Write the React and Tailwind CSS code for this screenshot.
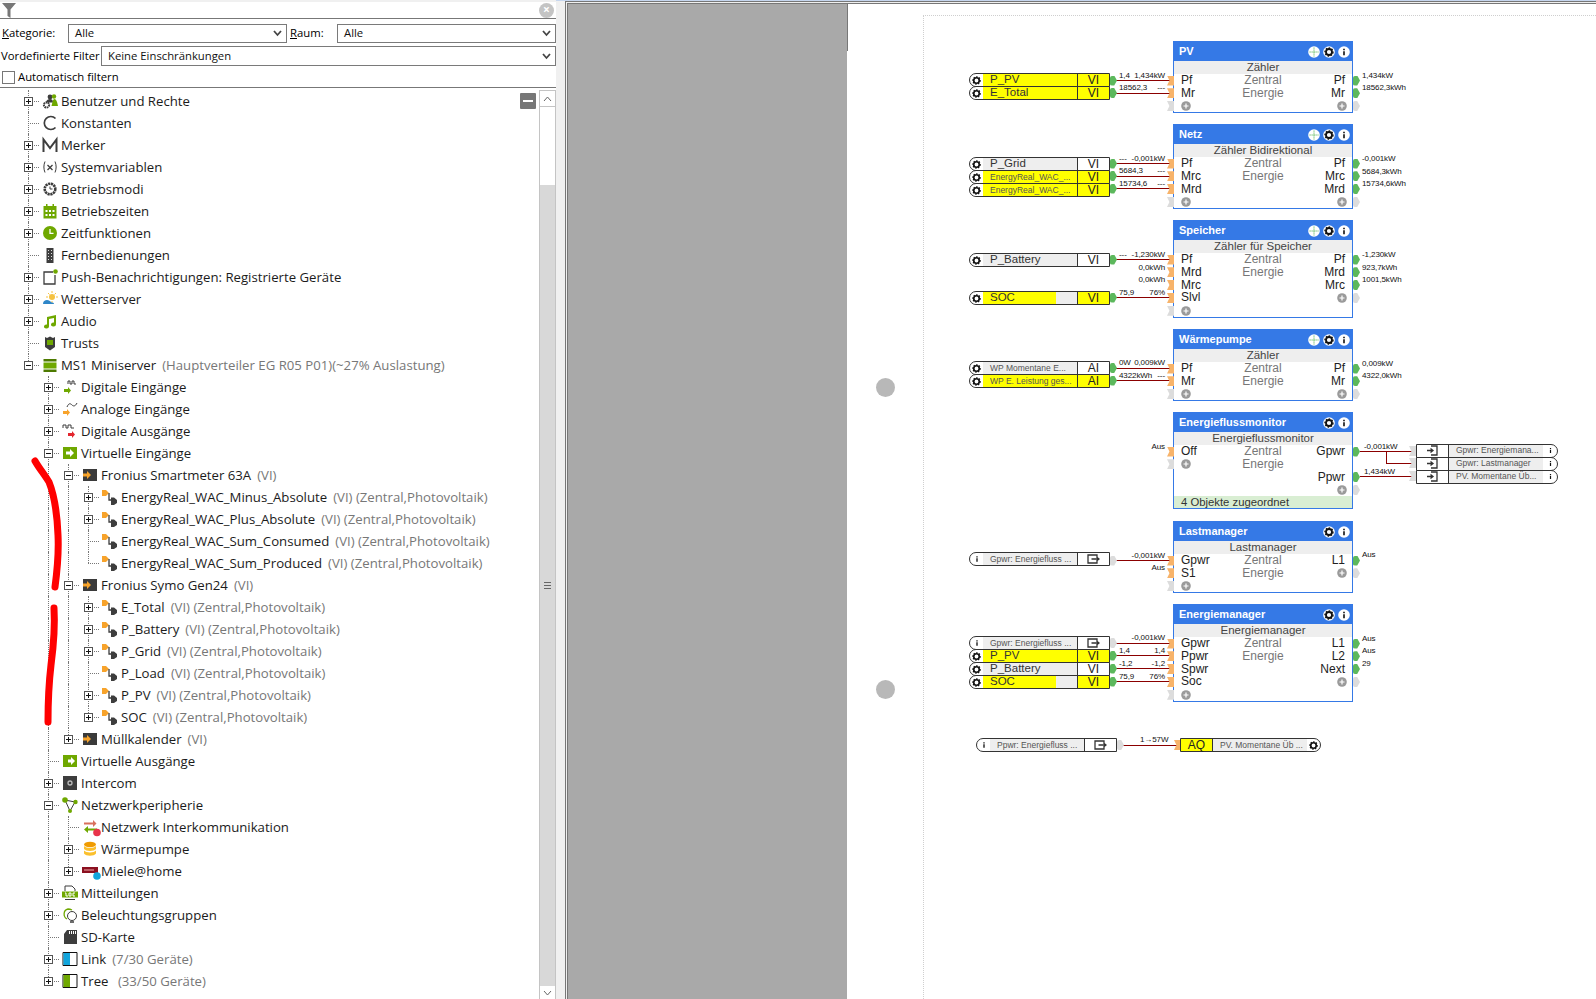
import React from 'react'

const FONT_UI = 'font-["Open_Sans","Noto_Sans",sans-serif]'
const FONT_DIAGRAM = 'font-["Liberation_Sans",Arial,sans-serif]'

const VI = '(VI) (Zentral,Photovoltaik)'

// Flat list of the project tree, depth says where a row hangs
const treeRows = [
  { d: 0, t: 'Benutzer und Rechte', e: '+', i: 'users' },
  { d: 0, t: 'Konstanten', i: 'c' },
  { d: 0, t: 'Merker', e: '+', i: 'm' },
  { d: 0, t: 'Systemvariablen', e: '+', i: 'x' },
  { d: 0, t: 'Betriebsmodi', e: '+', i: 'modes' },
  { d: 0, t: 'Betriebszeiten', e: '+', i: 'calendar' },
  { d: 0, t: 'Zeitfunktionen', e: '+', i: 'clock' },
  { d: 0, t: 'Fernbedienungen', i: 'remote' },
  { d: 0, t: 'Push-Benachrichtigungen: Registrierte Geräte', e: '+', i: 'push' },
  { d: 0, t: 'Wetterserver', e: '+', i: 'weather' },
  { d: 0, t: 'Audio', e: '+', i: 'audio' },
  { d: 0, t: 'Trusts', i: 'trust' },
  { d: 0, t: 'MS1 Miniserver', s: '(Hauptverteiler EG R05 P01)(~27% Auslastung)', e: '-', i: 'server' },
  { d: 1, t: 'Digitale Eingänge', e: '+', i: 'digIn' },
  { d: 1, t: 'Analoge Eingänge', e: '+', i: 'anaIn' },
  { d: 1, t: 'Digitale Ausgänge', e: '+', i: 'digOut' },
  { d: 1, t: 'Virtuelle Eingänge', e: '-', i: 'virt' },
  { d: 2, t: 'Fronius Smartmeter 63A', s: '(VI)', e: '-', i: 'dark' },
  { d: 3, t: 'EnergyReal_WAC_Minus_Absolute', s: VI, e: '+', i: 'sensor' },
  { d: 3, t: 'EnergyReal_WAC_Plus_Absolute', s: VI, e: '+', i: 'sensor' },
  { d: 3, t: 'EnergyReal_WAC_Sum_Consumed', s: VI, i: 'sensor' },
  { d: 3, t: 'EnergyReal_WAC_Sum_Produced', s: VI, i: 'sensor' },
  { d: 2, t: 'Fronius Symo Gen24', s: '(VI)', e: '-', i: 'dark' },
  { d: 3, t: 'E_Total', s: VI, e: '+', i: 'sensor' },
  { d: 3, t: 'P_Battery', s: VI, e: '+', i: 'sensor' },
  { d: 3, t: 'P_Grid', s: VI, e: '+', i: 'sensor' },
  { d: 3, t: 'P_Load', s: VI, i: 'sensor' },
  { d: 3, t: 'P_PV', s: VI, e: '+', i: 'sensor' },
  { d: 3, t: 'SOC', s: VI, e: '+', i: 'sensor' },
  { d: 2, t: 'Müllkalender', s: '(VI)', e: '+', i: 'dark' },
  { d: 1, t: 'Virtuelle Ausgänge', i: 'virtOut' },
  { d: 1, t: 'Intercom', e: '+', i: 'intercom' },
  { d: 1, t: 'Netzwerkperipherie', e: '-', i: 'network' },
  { d: 2, t: 'Netzwerk Interkommunikation', i: 'inter' },
  { d: 2, t: 'Wärmepumpe', e: '+', i: 'db' },
  { d: 2, t: 'Miele@home', e: '+', i: 'miele' },
  { d: 1, t: 'Mitteilungen', e: '+', i: 'log' },
  { d: 1, t: 'Beleuchtungsgruppen', e: '+', i: 'light' },
  { d: 1, t: 'SD-Karte', i: 'sd' },
  { d: 1, t: 'Link', s: '(7/30 Geräte)', e: '+', i: 'link' },
  { d: 1, t: 'Tree', s: ' (33/50 Geräte)', e: '+', i: 'tree' },
]

// does depth `col` still continue somewhere below row `idx`?
function continues(idx, col) {
  for (let k = idx + 1; k < treeRows.length; k++) {
    if (treeRows[k].d < col) return false
    if (treeRows[k].d === col) return true
  }
  return false
}

const G = '#6fa800'
const D = '#3d3d3d'
const O = '#f7a32b'

function TreeIcon({ name }) {
  const icons = {
    users: <g><circle cx="4.500" cy="12" r="2.600" fill="none" stroke={D} strokeWidth="2" strokeDasharray="1.600 .6" /><circle cx="8" cy="4" r="2.400" fill={D} /><path d="M4 9.500c0-2 2-3.500 4-3.500s3 1 3 3.500z" fill={D} /><circle cx="12" cy="3.500" r="2.200" fill={G} /><path d="M9.500 13c1-3 1-7 3-7s3 4 3.500 7z" fill={G} /></g>,
    c: <path d="M13.500 3.500A6.500 6.500 0 1 0 13.500 12.500" fill="none" stroke={D} strokeWidth="1.700" />,
    m: <path d="M1.500 15V2.500L8 11l6.500-8.500V15" fill="none" stroke={D} strokeWidth="2" />,
    x: <g fill="none" stroke={D} strokeWidth="1"><path d="M3 2.500C1.500 6 1.500 10 3 13.500M13 2.500c1.500 3.500 1.500 7.500 0 11" /><path d="M5.500 6l5 5M10.500 6l-5 5" strokeWidth="1.300" /></g>,
    modes: <g><circle cx="8" cy="8" r="5.300" fill="none" stroke={D} strokeWidth="2.600" strokeDasharray="2.200 .6" /><path d="M8 5.500V8h2.500" fill="none" stroke={D} /></g>,
    calendar: <g fill={G}><path d="M1.500 3h13v12.500h-13z" /><path d="M4 1h1.500v3H4zM10.500 1H12v3h-1.500z" /><path d="M3.500 7h2v2h-2zM7 7h2v2H7zM10.500 7h2v2h-2zM3.500 11h2v2h-2zM7 11h2v2H7zM10.500 11h2v2h-2z" fill="#fff" /></g>,
    clock: <g><circle cx="8" cy="8" r="7" fill={G} /><path d="M8 4v4.300h3.500" fill="none" stroke="#fff" strokeWidth="1.300" /></g>,
    remote: <g><path d="M4.500 1h7v15h-7z" fill={D} /><path d="M6 3h1v1H6zM9 3h1v1H9zM6 6h1v1H6zM9 6h1v1H9zM6 9h1v1H6zM9 9h1v1H9zM6 12h1v1H6zM9 12h1v1H9z" fill="#ddd" /></g>,
    push: <g><path d="M11 3H2v12h11V6" fill="none" stroke={D} strokeWidth="1.300" /><circle cx="13.500" cy="2.500" r="2.300" fill={G} /></g>,
    weather: <g><circle cx="10" cy="6" r="3" fill="#f5c242" /><path d="M10 0v2M10 10v2M4 6h2M14 6h2M6 2l1.500 1.500M14 2l-1.500 1.500" stroke="#f5c242" /><path d="M1 13c0-3 2-4 4-4s3 1 4 2 3 0 3 2z" fill="#2e86c8" /></g>,
    audio: <path d="M5 4l9-2v9.500a2.500 2 0 1 1-2-2V5L7 6v7.500a2.500 2 0 1 1-2-2z" fill={G} />,
    trust: <g><path d="M3 2l2 1 3-1.500L11 3l2-1v10l-5 3.500L3 12z" fill={D} /><path d="M5 5h6v5H5z" fill={G} /></g>,
    server: <g fill={G}><path d="M1.500 2h13v2.500h-13z" fill="#4d7a00" /><path d="M1.500 5.500h13v6h-13z" /><path d="M1.500 12.500h13V15h-13z" fill="#4d7a00" /></g>,
    digIn: <g><path d="M6 5V2h2v3h2V2h2v3h2" fill="none" stroke={D} /><path d="M2 10h4V8l3 3.500L6 15v-2H2z" fill={G} /></g>,
    anaIn: <g><path d="M5 6c2-5 4-3 5-2s3 2 5-2" fill="none" stroke={D} /><path d="M1 10h4V8l3 3.500L5 15v-2H1z" fill={O} /></g>,
    digOut: <g><path d="M1 5V2h3v3h2V2h3v3h3" fill="none" stroke={D} /><path d="M6 10h4V8l3 3.500L10 15v-2H6z" fill="#e3262e" /></g>,
    virt: <g><path d="M1 2h14v12H1z" fill={G} /><path d="M4 6.500h4V4l4 4-4 4V9.500H4z" fill="#fff" /></g>,
    virtOut: <g><path d="M1 2h14v12H1z" fill={G} /><path d="M6 6.500h3V4l4 4-4 4V9.500H6z" fill="#fff" /></g>,
    dark: <g><path d="M1 2h14v12H1z" fill="#3a3a3a" /><path d="M1 6.500h4V4l4 4-4 4V9.500H1z" fill={O} /></g>,
    sensor: <g><path d="M0 1h4l3 3-3 3H0z" fill={O} /><path d="M7 4v7h2" fill="none" stroke={D} strokeWidth="1.300" /><path d="M9 8.500h3l3 2.500v3l-3 2H9z" fill={D} /></g>,
    intercom: <g><path d="M1 1h14v14H1z" fill={D} /><circle cx="8" cy="8" r="2" fill="none" stroke="#bbb" strokeWidth="1.300" /></g>,
    network: <g><path d="M3 3l10 2-5 9z" fill="none" stroke={D} /><circle cx="3" cy="3" r="2.800" fill={G} /><circle cx="13.500" cy="5" r="2.200" fill={G} /><circle cx="8" cy="14" r="2" fill={G} /></g>,
    inter: <g><path d="M2 3.500h9V1l3.500 3.500L11 8V5.500H2z" fill="#d9705c" /><path d="M15 9.500H6V7l-4 3.500L6 14v-2.500h9z" fill={G} /><circle cx="15" cy="13.500" r="3.800" fill="#e8344a" /></g>,
    db: <g><ellipse cx="8" cy="3.500" rx="6" ry="2.800" fill="#f09b00" /><path d="M2 5c2 2.500 10 2.500 12 0v3c-2 2.500-10 2.500-12 0z" fill="#fbc02d" /><path d="M2 9.500c2 2.500 10 2.500 12 0v3c-2 3-10 3-12 0z" fill="#fbc02d" /></g>,
    miele: <g><path d="M0 4h16v6H0z" fill="#8b1020" /><path d="M2 6.500h10v1H2z" fill="#eaa" /><circle cx="15" cy="13" r="3.800" fill="#12a5dc" /></g>,
    log: <g><path d="M3 6V1h7l3 3v2" fill="none" stroke={D} /><path d="M0 6.500h16v6H0z" fill={G} /><path d="M3 14.500h10" stroke={D} /><path d="M3 8h1v3h2M7 8h2v3H7zM13 8h-2v3h2" fill="none" stroke="#fff" /></g>,
    light: <g fill="none"><path d="M5 12C1 10 1 3 6 2c2 0 3 .5 4 1" stroke={G} strokeWidth="1.300" /><circle cx="10" cy="9" r="4.500" stroke={D} /><path d="M8 15h4" stroke={D} strokeWidth="1.500" /></g>,
    sd: <g><path d="M5 1h10v14H2V5z" fill={D} /><path d="M7.500 2v3M9.500 2v3M11.500 2v3M13.500 2v3" stroke="#fff" /></g>,
    link: <g><path d="M1 1.500h14v13H1z" fill="#fff" stroke="#111" /><path d="M1.500 2h6.500v12H1.500z" fill="#12a5dc" /></g>,
    tree: <g><path d="M1 1.500h14v13H1z" fill="#fff" stroke="#111" /><path d="M1.500 2h6.500v12H1.500z" fill={G} /></g>,
  }
  return (
    <svg width="16" height="16" viewBox="0 0 16 16" className="overflow-visible">
      {icons[name]}
    </svg>
  )
}

function TreeRow({ row, idx }) {
  const guides = []
  for (let c = 0; c < row.d; c++) guides.push(continues(idx, c))
  const below = continues(idx, row.d)
  return (
    <div className="flex h-[22px] items-center whitespace-nowrap pl-[18px]">
      {guides.map((on, c) => (
        <div key={c} className="relative h-full w-[20px] shrink-0">
          {on && <div className="absolute bottom-0 left-[10px] top-0 border-l border-dotted border-[#777]" />}
        </div>
      ))}
      <div className="relative h-full w-[20px] shrink-0">
        <div className={`absolute left-[10px] top-0 border-l border-dotted border-[#777] ${below ? 'bottom-0' : 'h-[11px]'}`} />
        <div className="absolute left-[10px] top-[11px] w-[11px] border-t border-dotted border-[#777]" />
        {row.e && (
          <div className="absolute left-[6px] top-[7px] flex h-[9px] w-[9px] items-center justify-center border border-[#555] bg-white">
            <div className="h-px w-[5px] bg-[#111]" />
            {row.e === '+' && <div className="absolute h-[5px] w-px bg-[#111]" />}
          </div>
        )}
      </div>
      <div className="flex w-[23px] shrink-0 items-center justify-center">
        <TreeIcon name={row.i} />
      </div>
      <span className="text-[#1b1b1b]">{row.t}</span>
      {row.s && <span className="ml-[6px] whitespace-pre text-[#777]">{row.s}</span>}
    </div>
  )
}

function Chevron() {
  return (
    <svg width="9" height="7" viewBox="0 0 9 7" className="shrink-0">
      <path d="M1 1l3.500 4L8 1" fill="none" stroke="#444" strokeWidth="1.800" />
    </svg>
  )
}

function Combo({ value, className }) {
  return (
    <div className={`flex items-center justify-between border border-[#7a7a7a] bg-white pl-[6px] pr-[4px] ${className}`}>
      <span className="text-[#111]">{value}</span>
      <Chevron />
    </div>
  )
}

function Sidebar() {
  return (
    <aside className={`relative h-full w-[556px] shrink-0 overflow-hidden bg-white text-[11.300px] ${FONT_UI}`}>
      <div className="h-[2px] bg-[#f0f0f0]" />
      <div className="flex h-[17px] items-center justify-between border-b border-[#777] pl-[2px] pr-[2px]">
        <svg width="14" height="15" viewBox="0 0 14 15">
          <path d="M0 0h14L8.500 6.500V15L5.500 13V6.500z" fill="#777" />
        </svg>
        <div className="flex h-[15px] w-[15px] items-center justify-center rounded-full bg-[#c4c4c4] text-[12px] font-bold leading-none text-white">×</div>
      </div>
      <div className="mt-[5px] flex h-[19px] items-center">
        <span className="ml-[2px] w-[66px] shrink-0"><u>K</u>ategorie:</span>
        <Combo value="Alle" className="h-full w-[219px]" />
        <span className="ml-[3px] w-[47px] shrink-0"><u>R</u>aum:</span>
        <Combo value="Alle" className="h-full flex-1" />
      </div>
      <div className="mt-[3px] flex h-[20px] items-center">
        <span className="ml-[1px] w-[100px] shrink-0 whitespace-nowrap">Vordefinierte Filter</span>
        <Combo value="Keine Einschränkungen" className="h-full flex-1" />
      </div>
      <div className="mt-[4px] flex h-[14px] items-center">
        <div className="ml-[2px] h-[13px] w-[13px] border border-[#777] bg-white" />
        <span className="ml-[3px]">Automatisch filtern</span>
      </div>
      <div className="mt-[3px] border-t border-[#777]" />
      <div className="flex h-[911px]">
        <div className="min-w-0 flex-1 overflow-hidden pt-[2px] text-[13.200px] leading-[22px]">
          {treeRows.map((row, idx) => <TreeRow key={idx} row={row} idx={idx} />)}
        </div>
        <div className="mt-[2px] flex w-[17px] flex-col border border-b-0 border-[#c4c4c4] bg-white">
          <div className="flex h-[16px] items-center justify-center border-b border-[#c4c4c4]">
            <svg width="9" height="6" viewBox="0 0 9 6"><path d="M1 5l3.500-4L8 5" fill="none" stroke="#666" /></svg>
          </div>
          <div className="h-[78px]" />
          <div className="flex flex-1 flex-col items-center justify-center gap-[2px] bg-[#d8d8d8]">
            <div className="h-px w-[7px] bg-[#666]" />
            <div className="h-px w-[7px] bg-[#666]" />
            <div className="h-px w-[7px] bg-[#666]" />
          </div>
          <div className="flex h-[13px] items-center justify-center">
            <svg width="9" height="6" viewBox="0 0 9 6"><path d="M1 1l3.500 4L8 1" fill="none" stroke="#666" /></svg>
          </div>
        </div>
      </div>
      <div className="absolute left-[520px] top-[93px] flex h-[16px] w-[16px] items-center justify-center rounded-[1px] bg-[#777]">
        <div className="h-[2px] w-[10px] bg-white" />
      </div>
    </aside>
  )
}

// ---- diagram ---- the canvas starts at 847/4 on the page, coordinates below are page pixels
const at = (x, y) => ({ left: x - 847, top: y - 4 })

function GearDot({ size = 11 }) {
  return (
    <svg width={size} height={size} viewBox="0 0 12 12" className="shrink-0">
      <circle cx="6" cy="6" r="5.800" fill="#fff" />
      <circle cx="6" cy="6" r="3" fill="none" stroke="#111" strokeWidth="1.800" />
      <circle cx="6" cy="6" r="4" fill="none" stroke="#111" strokeWidth="1.400" strokeDasharray="1.500 1.500" />
    </svg>
  )
}

function InfoDot({ size = 11 }) {
  return (
    <svg width={size} height={size} viewBox="0 0 12 12" className="shrink-0">
      <circle cx="6" cy="6" r="5.800" fill="#fff" />
      <path d="M5.200 2.800h1.600v1.400H5.200zM5.200 5.200h1.600v4H5.200z" fill="#111" />
    </svg>
  )
}

function MoveDot() {
  return (
    <svg width="12" height="12" viewBox="0 0 12 12" className="shrink-0">
      <circle cx="6" cy="6" r="5.800" fill="#fff" />
      <path d="M6 1.500v9M1.500 6h9" stroke="#5cb85c" strokeDasharray="1.200 .8" />
    </svg>
  )
}

function PlusDot() {
  return (
    <svg width="10" height="10" viewBox="0 0 10 10" className="shrink-0">
      <circle cx="5" cy="5" r="4.800" fill="#9a9a9a" />
      <path d="M5 2.500v5M2.500 5h5" stroke="#fff" strokeWidth="1.200" />
    </svg>
  )
}

// ports take a raw style: inside a block row they sit relative to the row
function PortIn({ color, style }) {
  return <div className={`absolute h-[10px] w-[7px] [clip-path:polygon(0_0,100%_0,100%_100%,0_100%,35%_50%)] ${color}`} style={style} />
}

function PortOut({ color, style }) {
  return <div className={`absolute h-[10px] w-[7px] rounded-l-[2px] [clip-path:polygon(0_0,60%_0,100%_50%,60%_100%,0_100%)] ${color}`} style={style} />
}

function Block({ x, y, title, sub, rows, move = true, foot }) {
  return (
    <div className={`absolute w-[180px] border border-[#3579e6] bg-white ${FONT_DIAGRAM}`} style={at(x, y)}>
      <div className="flex h-[19px] items-center bg-[#3579e6] pl-[5px] pr-[2px] text-[11px] font-bold text-white">
        <span className="flex-1">{title}</span>
        <div className="flex gap-[3px]">
          {move && <MoveDot />}
          <GearDot size={12} />
          <InfoDot size={12} />
        </div>
      </div>
      <div className="h-[13px] bg-[#eeeeee] text-center text-[11.500px] leading-[13px] text-[#444]">{sub}</div>
      {rows.map(([l, c, r], i) => (
        <div key={i} className="relative flex h-[12.800px] items-center justify-between pl-[7px] pr-[7px] text-[12px] leading-[13px] text-[#222]">
          {l && <PortIn color={l === '+' ? 'bg-[#dcdcdc]' : 'bg-[#f7b36a]'} style={{ left: -7, top: 1.5 }} />}
          {r && <PortOut color={r === '+' ? 'bg-[#dcdcdc]' : 'bg-[#5cb85c]'} style={{ left: 179, top: 1.5 }} />}
          <span>{l === '+' ? <PlusDot /> : l}</span>
          <span className="absolute left-0 right-0 text-center text-[#777]">{c}</span>
          <span className={r === '+' ? '-mr-[2px]' : ''}>{r === '+' ? <PlusDot /> : r}</span>
        </div>
      ))}
      {foot && <div className="h-[12px] bg-[#d9eed3] pl-[7px] text-[11.300px] leading-[12px] text-[#333]">{foot}</div>}
    </div>
  )
}

function ExitArrow() {
  return (
    <svg width="13" height="10" viewBox="0 0 13 10">
      <path d="M10 3V1H1v8h9V7M4.500 5H12M9.500 3l2.500 2-2.500 2" fill="none" stroke="#333" strokeWidth="1.300" />
    </svg>
  )
}

function EnterArrow() {
  return (
    <svg width="13" height="11" viewBox="0 0 13 11">
      <path d="M5 1h6v9H5M1 5.500h6M4.500 3.500l2.500 2-2.500 2" fill="none" stroke="#333" strokeWidth="1.300" />
    </svg>
  )
}

// input tag on the left side of a block
function Input({ x, y, name, small, type = 'VI', yellow, bar, h = 13 }) {
  const info = type === 'out'
  const cellBg = yellow ? 'bg-[#ffff00]' : 'bg-white'
  return (
    <div className={`absolute flex w-[141px] items-stretch rounded-l-full border border-[#333] bg-white ${FONT_DIAGRAM}`} style={{ ...at(x, y), height: h + 1 }}>
      <div className="flex w-[13px] shrink-0 items-center justify-center">
        {info ? <InfoDot size={10} /> : <GearDot size={11} />}
      </div>
      <div className={`relative w-[95px] shrink-0 overflow-hidden whitespace-nowrap border-r border-[#333] ${yellow && !bar ? 'bg-[#ffff00]' : 'bg-[#eeeeee]'}`}>
        {bar && <div className="absolute bottom-0 left-0 top-0 w-[73px] bg-[#ffff00]" />}
        <span className={`absolute top-0 ${small ? 'left-[7px] text-[8.500px] leading-[12px] text-[#555]' : 'left-[7px] text-[11.500px] leading-[10.500px] text-[#333]'}`}>{name}</span>
      </div>
      <div className={`flex flex-1 items-center justify-center text-[12px] leading-none text-[#222] ${cellBg}`}>
        {info ? <ExitArrow /> : type}
      </div>
    </div>
  )
}

const inputs = [
  { x: 969, y: 73, name: 'P_PV', yellow: true },
  { x: 969, y: 86, name: 'E_Total', yellow: true },
  { x: 969, y: 157, name: 'P_Grid' },
  { x: 969, y: 170, name: 'EnergyReal_WAC_...', small: true, yellow: true },
  { x: 969, y: 183, name: 'EnergyReal_WAC_...', small: true, yellow: true },
  { x: 969, y: 253, name: 'P_Battery' },
  { x: 969, y: 291, name: 'SOC', yellow: true, bar: true },
  { x: 969, y: 361, name: 'WP  Momentane  E...', small: true, type: 'AI' },
  { x: 969, y: 374, name: 'WP E. Leistung  ges...', small: true, type: 'AI', yellow: true },
  { x: 969, y: 552, name: 'Gpwr:  Energiefluss ...', small: true, type: 'out' },
  { x: 969, y: 636, name: 'Gpwr:  Energiefluss ...', small: true, type: 'out' },
  { x: 969, y: 649, name: 'P_PV', yellow: true },
  { x: 969, y: 662, name: 'P_Battery' },
  { x: 969, y: 675, name: 'SOC', yellow: true, bar: true },
]

// [x1, x2, y, left label, right label, port colour]
const wires = [
  [1116, 1173, 80, '1,4', '1,434kW', 'g'],
  [1116, 1173, 92.5, '18562,3', '---', 'g'],
  [1116, 1173, 163, '---', '-0,001kW', 'g'],
  [1116, 1173, 175.5, '5684,3', '---', 'g'],
  [1116, 1173, 188, '15734,6', '---', 'g'],
  [1116, 1173, 259, '---', '-1,230kW', 'g'],
  [1116, 1173, 297, '75,9', '76%', 'g'],
  [1116, 1173, 367.5, '0W', '0,009kW', 'g'],
  [1116, 1173, 380, '4322kWh', '---', 'g'],
  [1116, 1173, 560, '', '-0,001kW', 'n'],
  [1116, 1173, 642.5, '', '-0,001kW', 'n'],
  [1116, 1173, 655, '1,4', '1,4', 'g'],
  [1116, 1173, 668, '-1,2', '-1,2', 'g'],
  [1116, 1173, 681, '75,9', '76%', 'g'],
]

// free value labels: [x, y, text, align]
const labels = [
  [1165, 263, '0,0kWh', 'r'], [1165, 275, '0,0kWh', 'r'],
  [1165, 442, 'Aus', 'r'], [1165, 563, 'Aus', 'r'],
  [1362, 71, '1,434kW'], [1362, 83, '18562,3kWh'],
  [1362, 154, '-0,001kW'], [1362, 167, '5684,3kWh'], [1362, 179, '15734,6kWh'],
  [1362, 250, '-1,230kW'], [1362, 263, '923,7kWh'], [1362, 275, '1001,5kWh'],
  [1362, 359, '0,009kW'], [1362, 371, '4322,0kWh'],
  [1362, 550, 'Aus'], [1362, 634, 'Aus'], [1362, 646, 'Aus'], [1362, 659, '29'],
  [1364, 442, '-0,001kW'], [1364, 467, '1,434kW'],
]

function Label({ x, y, text, align }) {
  const style = align === 'r' ? { right: 1596 - x, top: y - 4 } : at(x, y)
  return <span className={`absolute whitespace-nowrap text-[8px] leading-[10px] tracking-[-0.1px] text-[#111] ${FONT_DIAGRAM}`} style={style}>{text}</span>
}

function Wire({ x1, x2, y }) {
  return <div className="absolute h-px bg-[#8b0000]" style={{ ...at(x1, y), width: x2 - x1 }} />
}

function Output({ y, name }) {
  return (
    <div className={`absolute flex h-[13.500px] w-[142px] items-stretch rounded-r-full border border-[#333] bg-white ${FONT_DIAGRAM}`} style={at(1416, y)}>
      <div className="flex w-[32px] shrink-0 items-center justify-center border-r border-[#333]"><EnterArrow /></div>
      <div className="flex-1 overflow-hidden whitespace-nowrap bg-[#eeeeee] pl-[7px] text-[8.500px] leading-[11px] text-[#555]">{name}</div>
      <div className="flex w-[14px] shrink-0 items-center justify-center"><InfoDot size={9} /></div>
    </div>
  )
}

function Diagram() {
  return (
    <div className="relative flex-1 overflow-hidden bg-white">
      <div className="absolute left-0 top-0 h-[47px] w-px bg-[#777]" />
      <div className="absolute bottom-0 left-[76px] top-[11px] border-l border-dotted border-[#cfcfcf]" />
      <div className="absolute left-[76px] right-0 top-[11px] border-t border-dotted border-[#cfcfcf]" />
      <div className="absolute h-[19px] w-[19px] rounded-full bg-[#b8b8b8]" style={at(876, 378)} />
      <div className="absolute h-[19px] w-[19px] rounded-full bg-[#b8b8b8]" style={at(876, 680)} />

      {wires.map(([x1, x2, y, l, r, port], i) => (
        <React.Fragment key={i}>
          <Wire x1={x1} x2={x2} y={y} />
          <PortOut color={port === 'g' ? 'bg-[#5cb85c]' : 'bg-[#dcdcdc]'} style={at(x1 - 6, y - 4.5)} />
          {l && <Label x={x1 + 3} y={y - 9.5} text={l} />}
          {r && <Label x={x2 - 8} y={y - 9.5} text={r} align="r" />}
        </React.Fragment>
      ))}
      {labels.map(([x, y, text, align], i) => <Label key={i} x={x} y={y} text={text} align={align} />)}
      {inputs.map((n, i) => <Input key={i} {...n} />)}

      <Block x={1173} y={41} title="PV" sub="Zähler" rows={[['Pf', 'Zentral', 'Pf'], ['Mr', 'Energie', 'Mr'], ['+', '', '+']]} />
      <Block x={1173} y={124} title="Netz" sub="Zähler Bidirektional" rows={[['Pf', 'Zentral', 'Pf'], ['Mrc', 'Energie', 'Mrc'], ['Mrd', '', 'Mrd'], ['+', '', '+']]} />
      <Block x={1173} y={220} title="Speicher" sub="Zähler für Speicher" rows={[['Pf', 'Zentral', 'Pf'], ['Mrd', 'Energie', 'Mrd'], ['Mrc', '', 'Mrc'], ['Slvl', '', '+'], ['+', '', '']]} />
      <Block x={1173} y={329} title="Wärmepumpe" sub="Zähler" rows={[['Pf', 'Zentral', 'Pf'], ['Mr', 'Energie', 'Mr'], ['+', '', '+']]} />
      <Block x={1173} y={412} title="Energieflussmonitor" sub="Energieflussmonitor" move={false} foot="4 Objekte zugeordnet" rows={[['Off', 'Zentral', 'Gpwr'], ['+', 'Energie', ''], ['', '', 'Ppwr'], ['', '', '+']]} />
      <Block x={1173} y={521} title="Lastmanager" sub="Lastmanager" move={false} rows={[['Gpwr', 'Zentral', 'L1'], ['S1', 'Energie', '+'], ['+', '', '']]} />
      <Block x={1173} y={604} title="Energiemanager" sub="Energiemanager" move={false} rows={[['Gpwr', 'Zentral', 'L1'], ['Ppwr', 'Energie', 'L2'], ['Spwr', '', 'Next'], ['Soc', '', '+'], ['+', '', '']]} />

      {/* Energieflussmonitor outputs */}
      <Wire x1={1360} x2={1412} y={451} />
      <Wire x1={1360} x2={1412} y={476} />
      <div className="absolute h-[12px] w-px bg-[#8b0000]" style={at(1386, 451)} />
      <Wire x1={1386} x2={1412} y={462.5} />
      {[446, 458, 471].map(y => <PortIn key={y} color="bg-[#dcdcdc]" style={at(1409, y)} />)}
      <Output y={444} name="Gpwr:  Energiemana..." />
      <Output y={457} name="Gpwr: Lastmanager" />
      <Output y={470} name="PV.  Momentane  Üb..." />

      {/* Analog output at the bottom */}
      <Input x={976} y={738} name="Ppwr:  Energiefluss ..." small type="out" />
      <Wire x1={1122} x2={1180} y={745} />
      <PortOut color="bg-[#dcdcdc]" style={at(1117, 740)} />
      <PortIn color="bg-[#f7b36a]" style={at(1174, 740)} />
      <Label x={1140} y={735} text="1→57W" />
      <div className={`absolute flex h-[14px] w-[141px] items-stretch rounded-r-full border border-[#333] bg-white ${FONT_DIAGRAM}`} style={at(1180, 738)}>
        <div className="flex w-[32px] shrink-0 items-center justify-center border-r border-[#333] bg-[#ffff00] text-[12px] leading-none text-[#222]">AQ</div>
        <div className="flex-1 overflow-hidden whitespace-nowrap bg-[#eeeeee] pl-[7px] text-[8.500px] leading-[12px] text-[#555]">PV.  Momentane  Üb ...</div>
        <div className="flex w-[13px] shrink-0 items-center justify-center"><GearDot size={11} /></div>
      </div>
    </div>
  )
}

export default function App() {
  return (
    <div className="relative flex h-[999px] w-[1596px] overflow-hidden bg-white">
      <Sidebar />
      <div className="flex min-w-0 flex-1 flex-col border-t border-[#c6d6ee] bg-[#f0f0f0] pl-[9px]">
        <div className="flex min-h-0 flex-1 border-l-[3px] border-t-[3px] border-double border-[#777]">
          <div className="w-[279px] shrink-0 bg-[#a9a9a9]" />
          <Diagram />
        </div>
      </div>
      {/* hand drawn marks on the screenshot */}
      <svg width="70" height="290" viewBox="0 0 70 290" className="absolute left-0 top-[450px]" fill="none" stroke="#ff0000" strokeWidth="7" strokeLinecap="round">
        <path d="M35 11C39 18 44 24 49 32C53 42 57 60 58 85C59 105 57 122 55 137" />
        <path d="M54 158C55 175 53 200 51 215C49 232 48 255 48 272" />
      </svg>
    </div>
  )
}
